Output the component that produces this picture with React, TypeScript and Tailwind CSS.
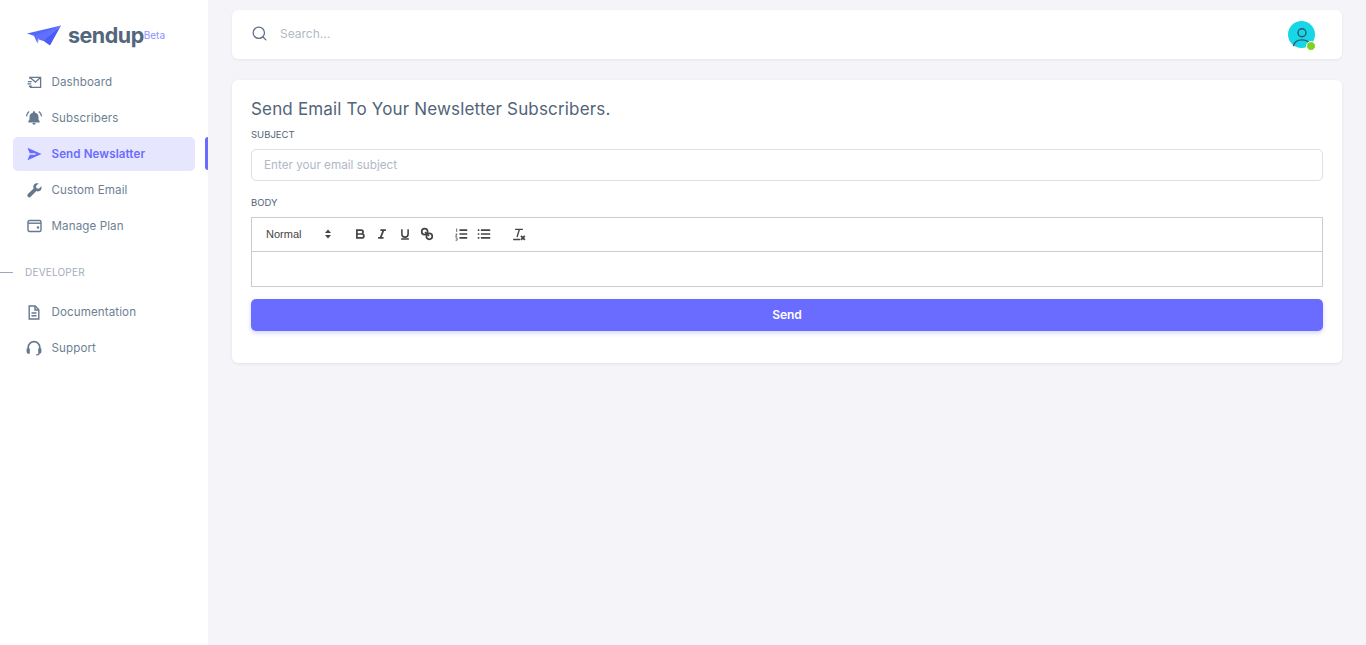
import React from "react";
import { Search } from "lucide-react";

const font = "font-['Inter','Liberation_Sans',sans-serif]";

function MailFast() {
  return (
    <svg width="15" height="15" viewBox="0 0 16 16" fill="none" stroke="#66788e" strokeWidth="1.4">
      <path d="M3 4V2.600h11.500v10.600H3" />
      <path d="M3.500 3l5.500 4.600L14 3" />
      <path d="M1 7h4M.5 9.500h4M2 12h3" />
    </svg>
  );
}
function Bell() {
  return (
    <svg width="16" height="16" viewBox="0 0 17 16" fill="#66788e">
      <path d="M8.500 .8c-.7 0-1.200.5-1.200 1.200v.4C5 2.900 3.700 4.800 3.700 7v2.600L2.500 11.500v1.200h12v-1.200l-1.200-1.900V7c0-2.200-1.300-4.100-3.600-4.600V2c0-.7-.5-1.200-1.200-1.200z" />
      <path d="M6.800 13.400h3.400a1.700 1.700 0 0 1-3.400 0z" />
      <path d="M3.400 1.200C1.700 2.500.7 4.200.5 6.300M13.600 1.200c1.700 1.300 2.700 3 2.900 5.100" fill="none" stroke="#66788e" strokeWidth="1.300" />
    </svg>
  );
}
function Arrow() {
  return (
    <svg width="15" height="14" viewBox="0 0 15 14" fill="#6a6cff">
      <path d="M.5.700L14.500 7 .5 13.300 2.700 7.800H8.500L8.500 6.200H2.700z" />
    </svg>
  );
}
function WrenchIcon() {
  return (
    <svg width="15" height="15" viewBox="0 0 15 15" fill="#66788e">
      <path d="M14.300 3.300l-2.500 2.500-2.300-.5-.5-2.300L11.500.5C9.500-.1 7.500.5 6.700 2.200c-.5 1.100-.5 2.200-.1 3.200L.9 11.100c-.7.7-.7 1.900 0 2.700.8.800 2 .8 2.800 0l5.700-5.700c1 .4 2.100.4 3.200-.1 1.700-.9 2.300-2.800 1.700-4.700z" />
    </svg>
  );
}
function Wallet() {
  return (
    <svg width="15" height="14" viewBox="0 0 15 14" fill="none" stroke="#66788e" strokeWidth="1.400">
      <rect x="1" y="1.500" width="13" height="11" rx="1.500" />
      <path d="M1 4.200h13" />
      <circle cx="11" cy="8.500" r=".6" fill="#66788e" />
    </svg>
  );
}
function Doc() {
  return (
    <svg width="14" height="15" viewBox="0 0 14 15" fill="none" stroke="#66788e" strokeWidth="1.400">
      <path d="M2.200 1h6l3.600 3.800V14H2.200z" />
      <path d="M8 1v4h3.800M4.500 8h5M4.500 10.800h5" />
    </svg>
  );
}
function Headset() {
  return (
    <svg width="16" height="16" viewBox="0 0 16 16" fill="none" stroke="#66788e" strokeWidth="1.700">
      <path d="M2.200 9V7.500a5.800 5.800 0 0 1 11.600 0V9" />
      <path d="M.6 8.500h3.200v5.200H2.400A1.800 1.800 0 0 1 .6 11.900zM15.400 8.500h-3.200v5.200h1.400a1.800 1.800 0 0 0 1.800-1.800z" fill="#66788e" stroke="none" />
      <path d="M13.500 13.500c-.4 1-1.500 1.500-3.500 1.500" strokeWidth="1.200" />
    </svg>
  );
}
function Logo() {
  return (
    <svg width="35" height="21" viewBox="0 0 35 21">
      <path d="M0 8.500L34 .5 12 12.500z" fill="#5567fb" />
      <path d="M34 .5L23 20.500 16 15.500z" fill="#4a5cf5" />
      <path d="M34 .5L7 11l3.500 7.500 1.500-4 4 1.500z" fill="#5f70fc" />
      <path d="M11.500 13.500L10.800 18" stroke="#dfe3ff" strokeWidth=".8" />
    </svg>
  );
}

function NavItem({ icon, label, active }: { icon: React.ReactNode; label: string; active?: boolean }) {
  return (
    <div className="relative h-[34px] mb-[2px]">
      <div className={`ml-[13px] w-[182px] h-[34px] rounded-[5px] flex items-center pl-[13px] ${active ? "bg-[#e6e6fe]" : ""}`}>
        <span className="w-[16px] h-[16px] flex items-center justify-center mr-[9.500px]">{icon}</span>
        <span className={`text-[11.600px] tracking-[0.1px] pt-[1px] ${active ? "text-[#6a6cff] font-semibold" : "text-[#6e7f93]"}`}>{label}</span>
      </div>
      {active && <div className="absolute right-0 top-0 w-[3px] h-[33px] rounded-l-[3px] bg-[#6a6cff]" />}
    </div>
  );
}

function Toolbar() {
  return (
    <div className="h-[34px] border-b border-[#cccccc] flex items-center text-[#444] pl-[14px] pb-[1px]">
      <span className="text-[11px] pt-[1px] font-['Liberation_Sans',sans-serif] w-[58px] text-[#444]">Normal</span>
      <svg width="8" height="10" viewBox="0 0 8 10" fill="#444" className="mr-[21px]">
        <path d="M4 .5L7 4H1zM4 9.500L1 6h6z" />
      </svg>
      <svg width="14" height="14" viewBox="0 0 18 18" fill="none" stroke="#444" strokeWidth="2.200" className="mr-[8px]">
        <path d="M5 4h5.500a2.500 2.500 0 0 1 0 5H5zM5 9h6.500a2.500 2.500 0 0 1 0 5H5z" />
      </svg>
      <svg width="14" height="14" viewBox="0 0 18 18" fill="none" stroke="#444" strokeWidth="2.200" className="mr-[9px]">
        <path d="M7 4h7M4 14h7M11 4l-4 10" />
      </svg>
      <svg width="14" height="14" viewBox="0 0 18 18" fill="none" stroke="#444" strokeWidth="2" className="mr-[8px]">
        <path d="M5 3v6a4 4 0 0 0 8 0V3M4 15.500h10" />
      </svg>
      <svg width="14" height="14" viewBox="0 0 18 18" fill="none" stroke="#444" strokeWidth="2.200" className="mr-[20px]">
        <circle cx="6" cy="6" r="3.800" />
        <circle cx="12" cy="12" r="3.800" />
        <path d="M6.500 6.500l5 5" />
      </svg>
      <svg width="14" height="14" viewBox="0 0 18 18" fill="none" stroke="#444" strokeWidth="2" className="mr-[9px]">
        <path d="M7 4h10M7 9h10M7 14h10" />
        <path d="M2.500 2.500h1v4M2 9h2l-2 3h2M2 14h2v3H2" strokeWidth="1" />
      </svg>
      <svg width="14" height="14" viewBox="0 0 18 18" fill="none" stroke="#444" strokeWidth="2" className="mr-[21px]">
        <path d="M5 4h12M5 9h12M5 14h12M1 4h2M1 9h2M1 14h2" />
      </svg>
      <svg width="14" height="14" viewBox="0 0 18 18" fill="none" stroke="#444" strokeWidth="1.800">
        <path d="M4 3h10M9.500 3L6.500 13M1.500 16h9" />
        <path d="M11.500 11.500l5 5M16.500 11.500l-5 5" strokeWidth="2.200" />
      </svg>
    </div>
  );
}

export default function App() {
  return (
    <div className={`${font} flex min-h-[645px] bg-[#f4f4f9]`}>
      <aside className="w-[208px] shrink-0 bg-white">
        <div className="h-[65px] flex items-center pl-[27px] pt-[5px]">
          <Logo />
          <span className="ml-[6px] text-[21.500px] font-bold tracking-[-0.5px] text-[#53667c]">sendup</span>
          <span className="text-[10px] text-[#8e90ff] mt-[1px]">Beta</span>
        </div>
        <NavItem icon={<MailFast />} label="Dashboard" />
        <NavItem icon={<Bell />} label="Subscribers" />
        <NavItem icon={<Arrow />} label="Send Newslatter" active />
        <NavItem icon={<WrenchIcon />} label="Custom Email" />
        <NavItem icon={<Wallet />} label="Manage Plan" />
        <div className="flex items-center h-[20px] mt-[19px] mb-[13px]">
          <span className="w-[13px] h-px bg-[#9aa8b7]" />
          <span className="ml-[12px] text-[10px] tracking-[0.2px] text-[#a2adba]">DEVELOPER</span>
        </div>
        <NavItem icon={<Doc />} label="Documentation" />
        <NavItem icon={<Headset />} label="Support" />
      </aside>
      <main className="flex-1 pl-[24px] pr-[24px] pt-[10px]">
        <header className="h-[49px] bg-white rounded-[6px] shadow-[0_1px_3px_rgba(60,60,90,0.08)] flex items-center pl-[19px] pr-[27px]">
          <Search size={17} color="#5d6f85" strokeWidth={1.800} className="mb-[2px]" />
          <span className="ml-[12px] pb-[2px] text-[12px] text-[#b0b9c5]">Search...</span>
          <div className="ml-auto relative w-[27px] h-[27px] rounded-full bg-[#17d7e6] flex items-end justify-center">
            <svg width="20" height="22" viewBox="0 0 21 23" fill="none" stroke="#2f5570" strokeWidth="1.500">
              <circle cx="10.500" cy="7" r="4.200" />
              <path d="M1.500 21c1-5 4.500-6.500 9-6.500s8 1.500 9 6.500" />
            </svg>
            <span className="absolute -right-[1px] -bottom-[3px] w-[10px] h-[10px] rounded-full bg-[#7ed321] border-[1.500px] border-white" />
          </div>
        </header>
        <section className="mt-[21px] bg-white rounded-[6px] shadow-[0_1px_3px_rgba(60,60,90,0.1)] px-[19px] pt-[18px] pb-[32px]">
          <h1 className="text-[17px] leading-[22px] font-normal tracking-[0.17px] text-[#526479]">Send Email To Your Newsletter Subscribers.</h1>
          <div className="mt-[9px] mb-[8px] text-[9.500px] leading-[12px] text-[#526479]">SUBJECT</div>
          <div className="h-[32px] rounded-[5px] border border-[#dcdfe5] flex items-center pl-[12px] pt-[2px] text-[11.700px] text-[#b0b9c5]">Enter your email subject</div>
          <div className="mt-[16px] mb-[8px] text-[9.500px] leading-[12px] text-[#526479]">BODY</div>
          <div className="border border-[#cccccc]">
            <Toolbar />
            <div className="h-[34px]" />
          </div>
          <button className="mt-[12px] w-full h-[32px] rounded-[5px] bg-[#6a6cff] text-white text-[12px] font-semibold shadow-[0_2px_4px_rgba(106,108,255,0.3)]">Send</button>
        </section>
      </main>
    </div>
  );
}
